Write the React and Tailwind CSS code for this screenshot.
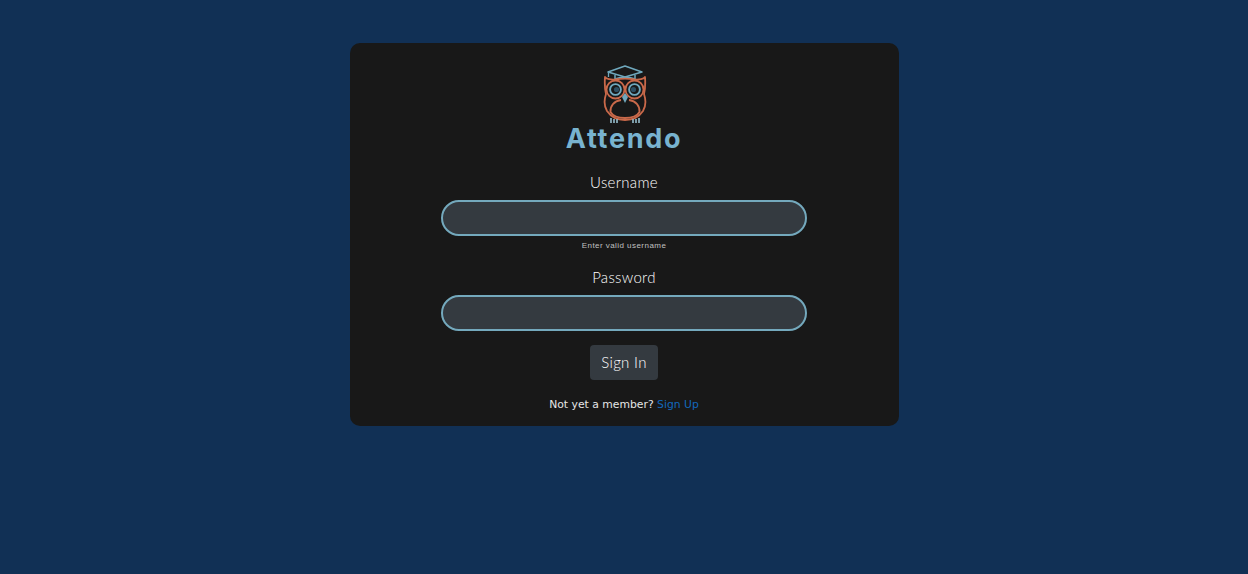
import React from "react";

function Owl() {
  return (
    <svg width="62" height="60" viewBox="0 0 62 60" fill="none" className="block blur-[0.4px]">
      {/* cap */}
      <path d="M14 7 L31 1 L48 7 L31 12 Z" stroke="#6fa8bd" strokeWidth="1.6" strokeLinejoin="round" />
      <path d="M21 10 V14 C26 11.5 36 11.5 41 14 V10" stroke="#6fa8bd" strokeWidth="1.5" />
      <path d="M14.5 7.5 V12" stroke="#6fa8bd" strokeWidth="1.3" />
      {/* body */}
      <path d="M11 12 C12 14 17 15 21 14.5 C27 13.5 35 13.5 41 14.5 C45 15 50 14 51 12 C51.5 19 51 25 50 29 C52 35 52 41 49 46 C45 52 38 55 31 55 C24 55 17 52 13 46 C10 41 10 35 12 29 C11 25 10.5 19 11 12 Z" stroke="#c9694a" strokeWidth="1.8" strokeLinejoin="round" />
      {/* eyes */}
      <circle cx="21.5" cy="24.5" r="9" stroke="#c9694a" strokeWidth="1.8" />
      <circle cx="40.5" cy="24.5" r="9" stroke="#c9694a" strokeWidth="1.8" />
      <circle cx="21.5" cy="24.5" r="5.4" stroke="#6fa8bd" strokeWidth="1.9" />
      <circle cx="40.5" cy="24.5" r="5.4" stroke="#6fa8bd" strokeWidth="1.9" />
      <circle cx="22.5" cy="24.5" r="2.6" fill="#2c4f63" />
      <circle cx="39.5" cy="24.5" r="2.6" fill="#2c4f63" />
      {/* beak */}
      <path d="M31 28 L34 32 L31 38 L28 32 Z" fill="#6fa8bd" />
      {/* belly */}
      <path d="M27 35 C20 36 16 41 16.5 47 C19 51.5 25 53 31 53 C37 53 43 51.5 45.5 47 C46 41 42 36 35 35" stroke="#c9694a" strokeWidth="1.8" />
      {/* feet */}
      <path d="M17 53 V58 M20 54 V58 M23 54 V58 M39 54 V58 M42 54 V58 M45 53 V58" stroke="#8fb4c2" strokeWidth="1.7" />
    </svg>
  );
}

function Field({ label, hint }) {
  return (
    <div className="flex flex-col items-center">
      <label className="-mt-[1px] mb-[1px] text-[15px] leading-[22px] font-light tracking-[0.3px] text-white font-['Lato','Open_Sans',sans-serif]">{label}</label>
      <input className="mt-[6px] w-[366px] h-[36px] rounded-[18px] border-2 border-[#74a9bd] bg-[#343a40] outline-none" />
      {hint && <span className="mt-[5px] text-[8px] leading-[10px] tracking-[0.45px] text-[#c0c0c0] font-['Liberation_Sans',sans-serif]">{hint}</span>}
    </div>
  );
}

export default function App() {
  return (
    <div className="min-h-[574px] bg-[#113055] flex justify-center items-start pt-[43px]">
      <div className="w-[549px] h-[383px] rounded-[10px] bg-[#181818] flex flex-col items-center pt-[22px]">
        <div className="pl-[2px]"><Owl /></div>
        <div className="-mt-[1px] text-[27px] leading-[30px] font-bold tracking-[1.7px] text-[#78b3cf] font-['Inter','Open_Sans',sans-serif]">Attendo</div>
        <div className="mt-[18px] flex flex-col">
          <Field label="Username" hint="Enter valid username" />
          <div className="mt-[16px]"><Field label="Password" /></div>
        </div>
        <button className="mt-[14px] w-[68px] h-[35px] rounded-[4px] bg-[#343a40] text-[15px] font-light tracking-[0.3px] text-white font-['Lato','Open_Sans',sans-serif]">Sign In</button>
        <p className="mt-[16px] text-[10.8px] leading-[18px] text-[#e6e6e6] font-['DejaVu_Sans',sans-serif]">
          Not yet a member? <a className="text-[#1268bd]">Sign Up</a>
        </p>
      </div>
    </div>
  );
}
